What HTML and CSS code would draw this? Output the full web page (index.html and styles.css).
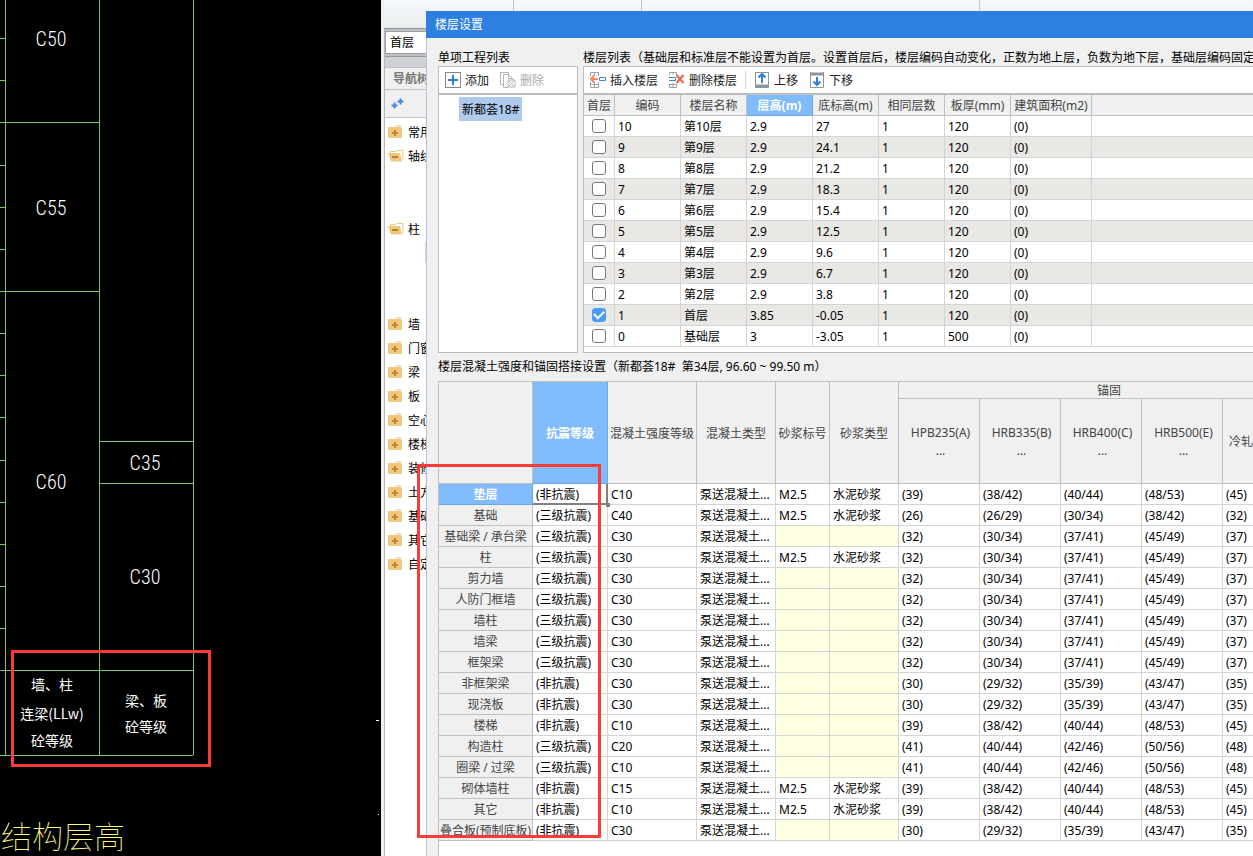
FILE: index.html
```html
<!DOCTYPE html>
<html lang="zh-CN">
<head>
<meta charset="utf-8">
<title>楼层设置</title>
<link rel="stylesheet" href="styles.css">
</head>
<body>
<svg class="symbols" aria-hidden="true">
  <symbol id="folder" viewBox="0 0 16 13">
    <path d="M7 1.500 8 0h5v1.500z" fill="#f3d9a5"/><rect y="2" width="14" height="11" rx="1" fill="#efc87f"/>
    <path d="M7 5v6M4 8h6" stroke="#c08a2c" stroke-width="2"/>
  </symbol>
  <symbol id="open" viewBox="0 0 16 13">
    <path d="M2.500 11V2.500H8l1-1h6V11" fill="#fff" stroke="#efc87f"/><path d="M0 4h12l2 8.500H3z" fill="#efc87f"/>
    <path d="M4 8h6" stroke="#b8842b" stroke-width="2"/>
  </symbol>
</svg>
<div class="desktop">
  <section class="cad">
    <svg class="drawing" width="381" height="856" viewBox="0 0 381 856">
      <path class="grid" d="M5.500 0V755M99.500 0V755M193.500 0V755M0 38.500H5M0 80.500H5M0 122.500H99M0 165.500H5M0 207.500H5M0 249.500H5M0 291.500H99M0 333.500H5M0 375.500H5M0 417.500H5M0 460.500H5M0 502.500H5M0 544.500H5M0 586.500H5M0 628.500H5M0 670.500H193M0 755.500H193M99 441.500H193M99 483.500H193"/>
      <path class="mark" d="M376 720.500h3M378 814.500h1"/>
      <g class="grade">
        <text x="51" y="46">C50</text>
        <text x="51" y="215">C55</text>
        <text x="51" y="489">C60</text>
        <text x="145" y="470">C35</text>
        <text x="145" y="584">C30</text>
      </g>
      <g class="note">
        <text x="52" y="690">墙、柱</text>
        <text x="52" y="719">连梁(LLw)</text>
        <text x="52" y="746">砼等级</text>
        <text x="146" y="706">梁、板</text>
        <text x="146" y="732">砼等级</text>
      </g>
      <text class="heading" x="1" y="848">结构层高</text>
    </svg>
    <div class="callout callout-grades"></div>
  </section>

  <section class="app">
    <div class="ribbon"></div>
    <aside class="side">
      <div class="picker"><select aria-label="楼层"><option>首层</option></select></div>
      <div class="strip"></div>
      <h2 class="nav-title">导航树</h2>
      <div class="nav-tools">
        <svg width="14" height="12" viewBox="0 0 14 12"><path d="M3.500 4.500v6M.5 7.500h6M9.500 .5v6M6.500 3.500h6" stroke="#3f86d8" stroke-width="2"/></svg>
      </div>
      <ul class="tree">
        <li><svg class="ico"><use href="#folder"/></svg>常用</li>
        <li class="open-short"><svg class="ico"><use href="#open"/></svg>轴线</li>
        <li class="open-long"><svg class="ico"><use href="#open"/></svg>柱</li>
        <li><svg class="ico"><use href="#folder"/></svg>墙</li>
        <li><svg class="ico"><use href="#folder"/></svg>门窗</li>
        <li><svg class="ico"><use href="#folder"/></svg>梁</li>
        <li><svg class="ico"><use href="#folder"/></svg>板</li>
        <li><svg class="ico"><use href="#folder"/></svg>空心</li>
        <li><svg class="ico"><use href="#folder"/></svg>楼梯</li>
        <li><svg class="ico"><use href="#folder"/></svg>装修</li>
        <li><svg class="ico"><use href="#folder"/></svg>土方</li>
        <li><svg class="ico"><use href="#folder"/></svg>基础</li>
        <li><svg class="ico"><use href="#folder"/></svg>其它</li>
        <li><svg class="ico"><use href="#folder"/></svg>自定</li>
      </ul>
    </aside>

    <div class="dialog" role="dialog" aria-labelledby="dialog-title">
      <h1 class="title" id="dialog-title">楼层设置</h1>
      <div class="panels">
        <div class="caption">单项工程列表</div>
        <div class="caption">楼层列表（基础层和标准层不能设置为首层。设置首层后，楼层编码自动变化，正数为地上层，负数为地下层，基础层编码固定</div>
        <div class="panel">
          <div class="toolbar">
            <button type="button"><svg width="16" height="16" viewBox="0 0 16 16" fill="none"><rect x=".5" y=".5" width="15" height="15" stroke="#7b8a94"/><path d="M8 3v10M3 8h10" stroke="#2f7fdd" stroke-width="2"/></svg>添加</button>
            <button type="button" disabled><svg width="16" height="16" viewBox="0 0 16 16" fill="none" stroke="#b4b4b4"><path d="M3.500 12.500h-3V.5h8v2"/><path d="M8 15.500H3.500v-13h5l4 4V8M8.500 2.500v4h4"/><path d="M8 8h7v7H8zM9 9l5 5M14 9l-5 5"/></svg>删除</button>
          </div>
          <ul class="projects"><li>新都荟18#</li></ul>
        </div>
        <div class="panel">
          <div class="toolbar">
            <button type="button"><svg width="16" height="16" viewBox="0 0 16 16" fill="none"><path d="M.5 4V.5h8V4M4.500 .5V4M.5 10v5.500h8V10M4.500 10v5.500M.5 12.500h8" stroke="#9aa3a8"/><path d="M9.500 5.500h6v3h-6z" stroke="#3f86d8"/><path d="M8 7H1M4 3.500.8 7 4 10.500" stroke="#f5895f" stroke-width="2"/></svg>插入楼层</button>
            <button type="button"><svg width="16" height="16" viewBox="0 0 16 16" fill="none"><path d="M.5 3V.5h7V3M4 .5V3M.5 12v3.500h7V12M4 11v4M.5 12.500h7" stroke="#9aa3a8"/><path d="M0 5.500h6.500v3H0" stroke="#3f86d8"/><path d="m7.500 3 7 8M14.500 3l-7 8" stroke="#e2694f" stroke-width="2"/></svg>删除楼层</button>
            <span class="divider"></span>
            <button type="button"><svg width="16" height="16" viewBox="0 0 16 16" fill="none"><path d="M1.500 0v15.500h13V0" stroke="#8a959c"/><path d="M1 14h14" stroke="#8a959c" stroke-width="3"/><path d="M8 11V2M4.500 5.500 8 2l3.500 3.500" stroke="#2f7fdd" stroke-width="2"/><path d="M1 .5h14" stroke="#8a959c"/></svg>上移</button>
            <button type="button"><svg width="16" height="16" viewBox="0 0 16 16" fill="none"><path d="M1.500 0v15.500h13V0" stroke="#8a959c"/><path d="M1 2h14" stroke="#8a959c" stroke-width="3"/><path d="M8 5v8M4.500 9.500 8 13l3.500-3.500" stroke="#2f7fdd" stroke-width="2"/></svg>下移</button>
          </div>
          <table class="floors">
            <colgroup><col class="w31"><col class="w66"><col class="w66"><col class="w66"><col class="w66"><col class="w66"><col class="w66"><col class="w81"><col></colgroup>
            <thead><tr><th>首层</th><th>编码</th><th>楼层名称</th><th class="active">层高(m)</th><th>底标高(m)</th><th>相同层数</th><th>板厚(mm)</th><th>建筑面积(m2)</th><th></th></tr></thead>
            <tbody>
              <tr><td><input type="checkbox" aria-label="第10层设为首层"></td><td>10</td><td>第10层</td><td>2.9</td><td>27</td><td>1</td><td>120</td><td>(0)</td><td></td></tr>
              <tr><td><input type="checkbox" aria-label="第9层设为首层"></td><td>9</td><td>第9层</td><td>2.9</td><td>24.1</td><td>1</td><td>120</td><td>(0)</td><td></td></tr>
              <tr><td><input type="checkbox" aria-label="第8层设为首层"></td><td>8</td><td>第8层</td><td>2.9</td><td>21.2</td><td>1</td><td>120</td><td>(0)</td><td></td></tr>
              <tr><td><input type="checkbox" aria-label="第7层设为首层"></td><td>7</td><td>第7层</td><td>2.9</td><td>18.3</td><td>1</td><td>120</td><td>(0)</td><td></td></tr>
              <tr><td><input type="checkbox" aria-label="第6层设为首层"></td><td>6</td><td>第6层</td><td>2.9</td><td>15.4</td><td>1</td><td>120</td><td>(0)</td><td></td></tr>
              <tr><td><input type="checkbox" aria-label="第5层设为首层"></td><td>5</td><td>第5层</td><td>2.9</td><td>12.5</td><td>1</td><td>120</td><td>(0)</td><td></td></tr>
              <tr><td><input type="checkbox" aria-label="第4层设为首层"></td><td>4</td><td>第4层</td><td>2.9</td><td>9.6</td><td>1</td><td>120</td><td>(0)</td><td></td></tr>
              <tr><td><input type="checkbox" aria-label="第3层设为首层"></td><td>3</td><td>第3层</td><td>2.9</td><td>6.7</td><td>1</td><td>120</td><td>(0)</td><td></td></tr>
              <tr><td><input type="checkbox" aria-label="第2层设为首层"></td><td>2</td><td>第2层</td><td>2.9</td><td>3.8</td><td>1</td><td>120</td><td>(0)</td><td></td></tr>
              <tr><td><input type="checkbox" aria-label="首层" checked></td><td>1</td><td>首层</td><td>3.85</td><td>-0.05</td><td>1</td><td>120</td><td>(0)</td><td></td></tr>
              <tr><td><input type="checkbox" aria-label="基础层设为首层"></td><td>0</td><td>基础层</td><td>3</td><td>-3.05</td><td>1</td><td>500</td><td>(0)</td><td></td></tr>
            </tbody>
          </table>
        </div>
      </div>
      <div class="caption caption-lower">楼层混凝土强度和锚固搭接设置（新都荟18#&nbsp; 第34层, 96.60 ~ 99.50 m）</div>
      <div class="sheet">
        <table class="strength">
          <colgroup><col class="w94"><col class="w75"><col class="w89"><col class="w79"><col class="w54"><col class="w69"><col class="w81"><col class="w81"><col class="w81"><col class="w81"><col class="w97"></colgroup>
          <thead>
            <tr class="group"><th rowspan="2"></th><th rowspan="2" class="active">抗震等级</th><th rowspan="2">混凝土强度等级</th><th rowspan="2">混凝土类型</th><th rowspan="2">砂浆标号</th><th rowspan="2">砂浆类型</th><th colspan="5">锚固</th></tr>
            <tr class="kinds"><th>HPB235(A)<br>...</th><th>HRB335(B)<br>...</th><th>HRB400(C)<br>...</th><th>HRB500(E)<br>...</th><th class="cut">冷轧</th></tr>
          </thead>
          <tbody>
            <tr><th class="active">垫层</th><td class="current">(非抗震)<i class="handle"></i></td><td>C10</td><td>泵送混凝土...</td><td>M2.5</td><td>水泥砂浆</td><td>(39)</td><td>(38/42)</td><td>(40/44)</td><td>(48/53)</td><td>(45)</td></tr>
            <tr><th>基础</th><td>(三级抗震)</td><td>C40</td><td>泵送混凝土...</td><td>M2.5</td><td>水泥砂浆</td><td>(26)</td><td>(26/29)</td><td>(30/34)</td><td>(38/42)</td><td>(32)</td></tr>
            <tr><th>基础梁 / 承台梁</th><td>(三级抗震)</td><td>C30</td><td>泵送混凝土...</td><td class="off"></td><td class="off"></td><td>(32)</td><td>(30/34)</td><td>(37/41)</td><td>(45/49)</td><td>(37)</td></tr>
            <tr><th>柱</th><td>(三级抗震)</td><td>C30</td><td>泵送混凝土...</td><td>M2.5</td><td>水泥砂浆</td><td>(32)</td><td>(30/34)</td><td>(37/41)</td><td>(45/49)</td><td>(37)</td></tr>
            <tr><th>剪力墙</th><td>(三级抗震)</td><td>C30</td><td>泵送混凝土...</td><td class="off"></td><td class="off"></td><td>(32)</td><td>(30/34)</td><td>(37/41)</td><td>(45/49)</td><td>(37)</td></tr>
            <tr><th>人防门框墙</th><td>(三级抗震)</td><td>C30</td><td>泵送混凝土...</td><td class="off"></td><td class="off"></td><td>(32)</td><td>(30/34)</td><td>(37/41)</td><td>(45/49)</td><td>(37)</td></tr>
            <tr><th>墙柱</th><td>(三级抗震)</td><td>C30</td><td>泵送混凝土...</td><td class="off"></td><td class="off"></td><td>(32)</td><td>(30/34)</td><td>(37/41)</td><td>(45/49)</td><td>(37)</td></tr>
            <tr><th>墙梁</th><td>(三级抗震)</td><td>C30</td><td>泵送混凝土...</td><td class="off"></td><td class="off"></td><td>(32)</td><td>(30/34)</td><td>(37/41)</td><td>(45/49)</td><td>(37)</td></tr>
            <tr><th>框架梁</th><td>(三级抗震)</td><td>C30</td><td>泵送混凝土...</td><td class="off"></td><td class="off"></td><td>(32)</td><td>(30/34)</td><td>(37/41)</td><td>(45/49)</td><td>(37)</td></tr>
            <tr><th>非框架梁</th><td>(非抗震)</td><td>C30</td><td>泵送混凝土...</td><td class="off"></td><td class="off"></td><td>(30)</td><td>(29/32)</td><td>(35/39)</td><td>(43/47)</td><td>(35)</td></tr>
            <tr><th>现浇板</th><td>(非抗震)</td><td>C30</td><td>泵送混凝土...</td><td class="off"></td><td class="off"></td><td>(30)</td><td>(29/32)</td><td>(35/39)</td><td>(43/47)</td><td>(35)</td></tr>
            <tr><th>楼梯</th><td>(非抗震)</td><td>C10</td><td>泵送混凝土...</td><td class="off"></td><td class="off"></td><td>(39)</td><td>(38/42)</td><td>(40/44)</td><td>(48/53)</td><td>(45)</td></tr>
            <tr><th>构造柱</th><td>(三级抗震)</td><td>C20</td><td>泵送混凝土...</td><td class="off"></td><td class="off"></td><td>(41)</td><td>(40/44)</td><td>(42/46)</td><td>(50/56)</td><td>(48)</td></tr>
            <tr><th>圈梁 / 过梁</th><td>(三级抗震)</td><td>C10</td><td>泵送混凝土...</td><td class="off"></td><td class="off"></td><td>(41)</td><td>(40/44)</td><td>(42/46)</td><td>(50/56)</td><td>(48)</td></tr>
            <tr><th>砌体墙柱</th><td>(非抗震)</td><td>C15</td><td>泵送混凝土...</td><td>M2.5</td><td>水泥砂浆</td><td>(39)</td><td>(38/42)</td><td>(40/44)</td><td>(48/53)</td><td>(45)</td></tr>
            <tr><th>其它</th><td>(非抗震)</td><td>C10</td><td>泵送混凝土...</td><td>M2.5</td><td>水泥砂浆</td><td>(39)</td><td>(38/42)</td><td>(40/44)</td><td>(48/53)</td><td>(45)</td></tr>
            <tr><th>叠合板(预制底板)</th><td>(非抗震)</td><td>C30</td><td>泵送混凝土...</td><td class="off"></td><td class="off"></td><td>(30)</td><td>(29/32)</td><td>(35/39)</td><td>(43/47)</td><td>(35)</td></tr>
          </tbody>
        </table>
      </div>
    </div>
    <div class="callout callout-seismic"></div>
  </section>
</div>
</body>
</html>
```
FILE: styles.css
```css
* { box-sizing: border-box; }
body {
  margin: 0;
  font: 12px/20px "Noto Sans", "Noto Sans CJK SC", sans-serif;
  color: #000;
}
h1, h2, ul { margin: 0; padding: 0; font-size: 12px; font-weight: 400; list-style: none; }
.symbols { position: absolute; width: 0; height: 0; }
.desktop { display: flex; height: 100vh; overflow: hidden; }

/* CAD canvas */
.cad { position: relative; flex: none; overflow: hidden; background: #000; }
.drawing { display: block; }
.grid { stroke: #7dc866; fill: none; }
.mark { stroke: #fff; }
.grade { fill: #fff; font: 300 20px "Liberation Sans Narrow", "Roboto Condensed", Roboto, sans-serif; text-anchor: middle; }
.note { fill: #fff; font: 400 14px "Noto Sans CJK SC", sans-serif; text-anchor: middle; }
.heading { fill: #ffff80; font: 100 31px "Noto Sans CJK SC", sans-serif; }
.callout { position: absolute; border: 3px solid #fb3a3a; pointer-events: none; }
.callout-grades { left: 11px; top: 650px; width: 200px; height: 117px; }
.callout-seismic { left: 36px; top: 464px; width: 184px; height: 374px; }

/* Main window behind the dialog */
.app { position: relative; flex: 1; min-width: 0; background: #f0f0f0; }
.ribbon {
  height: 29px;
  margin-left: 3px;
  border-bottom: 1px solid #8f9399;
  background:
    linear-gradient(#c4c7ca, #c4c7ca) 129px 0 / 1px 100% no-repeat,
    linear-gradient(#c4c7ca, #c4c7ca) 257px 0 / 1px 100% no-repeat,
    linear-gradient(#c4c7ca, #c4c7ca) 595px 0 / 1px 100% no-repeat,
    linear-gradient(#f6f9fb, #e9eeee);
}
.side { width: 60px; margin-left: 3px; border-left: 1px solid #b8b8b8; }
.picker { height: 28px; padding: 2px 0; background: #bfc1c6; border-bottom: 1px solid #999; }
.picker select {
  width: 60px; height: 23px; padding: 0 4px;
  border: 1px solid #a0a0a0; border-radius: 0; background: #fff; color: #000;
  font: inherit; appearance: none;
}
.strip { height: 10px; background: #cfd1d9; }
.nav-title { height: 23px; padding-left: 8px; line-height: 22px; border: solid #bfc1c6; border-width: 1px 0; color: #777; font-weight: 700; white-space: nowrap; }
.nav-tools { height: 28px; padding: 8px 6px; border-bottom: 1px solid #bfc1c6; line-height: 0; }
.tree {
  height: 738px; padding-top: 2px;
  background: linear-gradient(#c9d9ec, #c9d9ec) 40px 124px / 20px 21px no-repeat #fff;
}
.tree li { display: flex; align-items: center; gap: 4px; height: 24px; padding: 2px 0 0 3px; white-space: nowrap; }
.tree .open-short { margin-bottom: 49px; }
.tree .open-long { margin-bottom: 71px; }
.ico { width: 16px; height: 13px; margin-bottom: 4px; }

/* Dialog */
.dialog {
  position: absolute; left: 45px; top: 11px; right: 0; bottom: 0;
  display: flex; flex-direction: column; overflow: hidden;
  background: linear-gradient(#b5c0da, #b5c0da) 0 0 / 1px 100% no-repeat #f0f0f0;
}
.title { flex: none; padding-left: 9px; height: 27px; line-height: 27px; background: #2d7fe0; color: #fff; }
.panels { display: grid; grid-template-columns: 140px minmax(0, 1fr); column-gap: 5px; padding-left: 12px; }
.caption { height: 28px; padding-top: 10px; line-height: 18px; white-space: nowrap; padding-top: 11px; line-height: 17px; }
.caption-lower { flex: none; padding: 4px 0 0 12px; line-height: 20px; }
.panel { border: 1px solid #bcbcbc; background: #fff; }
.panel:last-child { border-right: 0; padding-bottom: 5px; }
.toolbar { display: flex; align-items: center; gap: 1px; height: 28px; padding-left: 1px; border-bottom: 2px solid #bcbcbc; }
.toolbar button {
  display: flex; align-items: center; gap: 4px;
  height: 24px; padding: 2px 5px 0; border: 0; background: none;
  color: #222; font: inherit; white-space: nowrap;
}
.toolbar svg { margin-bottom: 2px; }
.toolbar button:disabled { color: #aaa; }
.divider { width: 1px; height: 18px; margin: 0 2px; background: #d5d5d5; }
.projects { padding: 2px 0 0 20px; }
.projects li { display: inline-block; height: 24px; padding: 2px 3px 0; line-height: 22px; background: #aecbee; }

table { border-spacing: 0; table-layout: fixed; }
th, td {
  height: 21px; padding: 2px 0 0; overflow: hidden;
  border: solid #d4d4d4; border-width: 0 1px 1px 0;
  line-height: 18px; text-align: left; white-space: nowrap;
}
td { padding-left: 3px; }
th { border-color: #c0c0c0; background: #f0f0f0; color: #444; font-weight: 400; text-align: center; }
th.active { background: #80bbfb; border-color: #6aa8ec; color: #fff; font-weight: 700; }
.floors { width: 100%; }
.floors th:last-child, .floors td:last-child { border-right: 0; }
.floors tbody tr:nth-child(even) { background: #e9e8e4; }
.floors td:first-child { padding: 0 0 0 8px; line-height: 0; }
input[type="checkbox"] {
  width: 14px; height: 14px; margin: 0;
  appearance: none; border: 1px solid #777; border-radius: 3px; background: #fff;
}
input[type="checkbox"]:checked {
  display: grid; place-items: center;
  border-color: #4a9cf8; background: #4a9cf8;
}
input[type="checkbox"]:checked::before {
  content: ""; width: 8px; height: 5px; margin-bottom: 3px;
  border: solid #fff; border-width: 0 0 2px 2px; transform: rotate(-45deg);
}
.sheet { flex: 1; margin-left: 12px; border: solid #c0c0c0; border-width: 1px 0 0 1px; background: #fff; }
.strength { width: 881px; }
.strength .group th { height: 17px; line-height: 14px; }
.strength .kinds th { height: 85px; padding-left: 3px; line-height: 18px; }
.strength .kinds .cut { padding-left: 6px; text-align: left; }
.off { background: #ffffe1; }
.current { position: relative; overflow: visible; box-shadow: inset -1px -1px #808080; border-color: #808080; }
.handle { position: absolute; right: -3px; bottom: -3px; width: 4px; height: 4px; background: #808080; }
.w31 { width: 31px; }
.w54 { width: 54px; }
.w66 { width: 66px; }
.w69 { width: 69px; }
.w75 { width: 75px; }
.w79 { width: 79px; }
.w81 { width: 81px; }
.w89 { width: 89px; }
.w94 { width: 94px; }
.w97 { width: 97px; }
```
